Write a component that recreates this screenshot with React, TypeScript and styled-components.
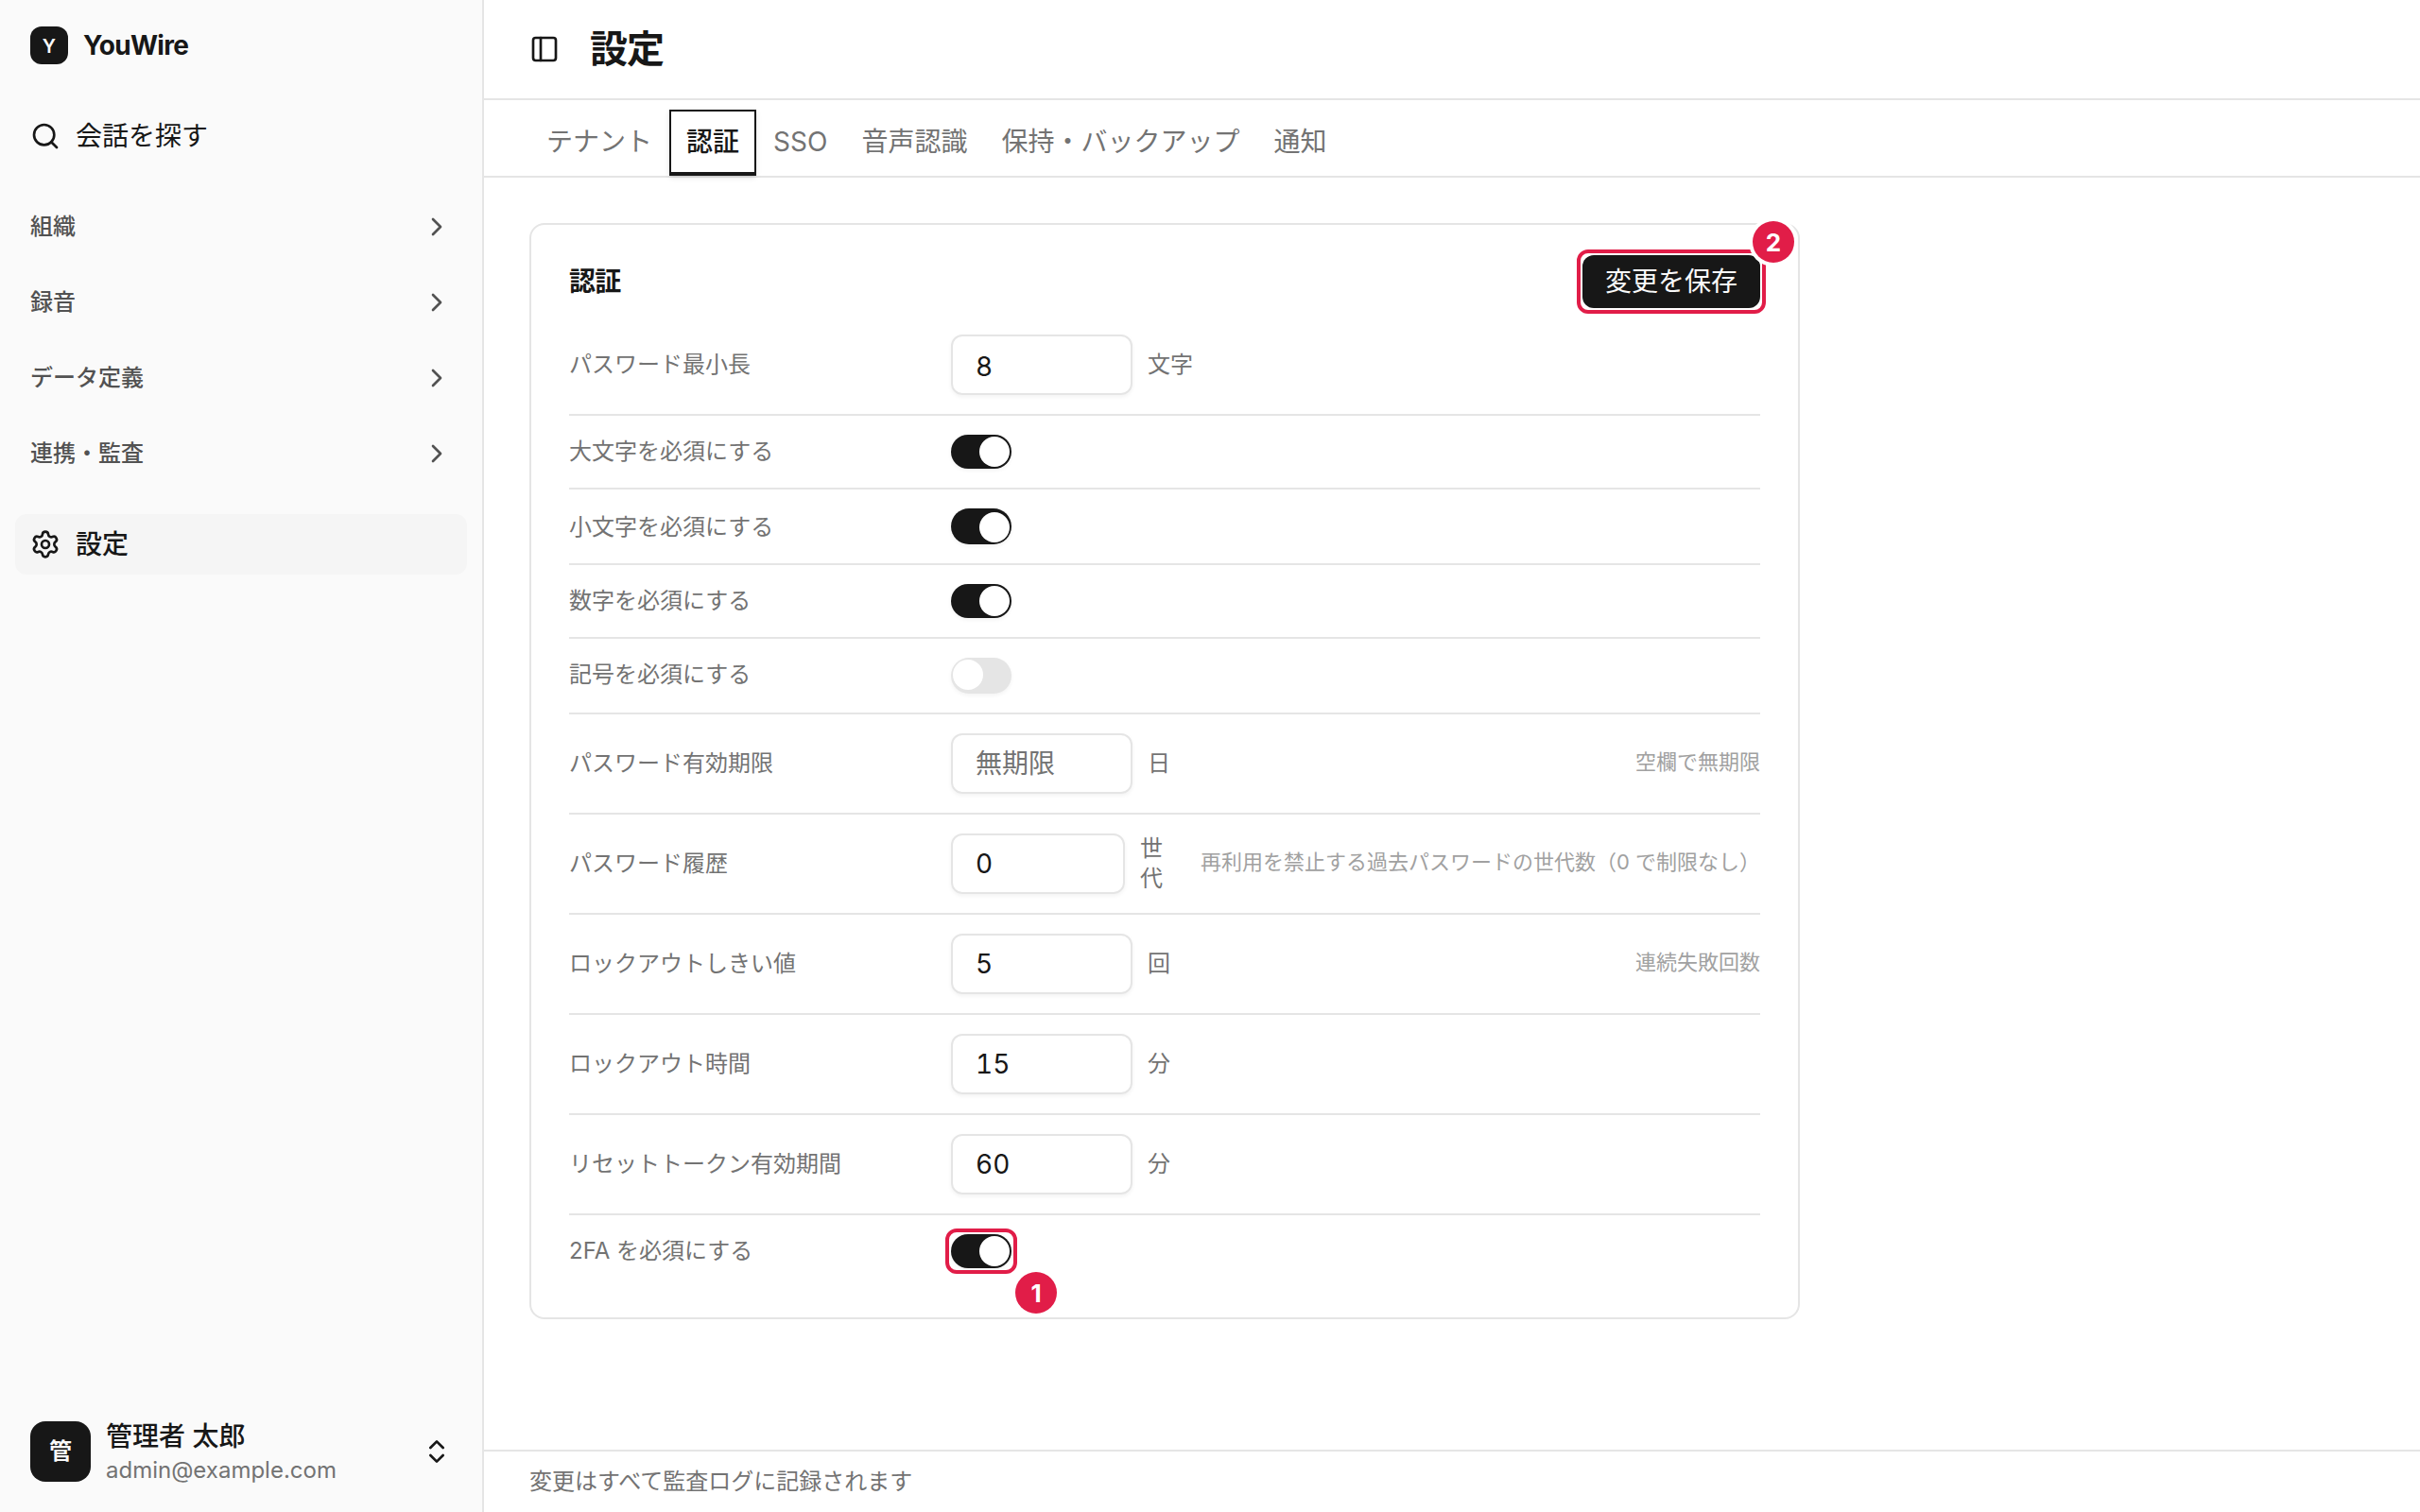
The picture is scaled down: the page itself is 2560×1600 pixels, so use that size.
import React from 'react';
import styled, { createGlobalStyle, css } from 'styled-components';
import { ChevronRight, ChevronsUpDown, PanelLeft, Search, Settings } from 'lucide-react';

const ink = '#171717';
const muted = '#737373';
const line = '#e5e5e5';
const accent = '#e11d48';

const GlobalStyle = createGlobalStyle`
  *, *::before, *::after { box-sizing: border-box; }
  body {
    margin: 0;
    background: #fff;
    color: ${ink};
    font-family: Inter, "Noto Sans CJK JP", sans-serif;
    font-size: 28px;
    line-height: 40px;
    -webkit-font-smoothing: antialiased;
  }
  button, input { font: inherit; color: inherit; }
`;

const Shell = styled.div`
  display: grid;
  grid-template-columns: 512px 1fr;
  width: 2560px;
  height: 1600px;
  overflow: hidden;
`;

const Sidebar = styled.aside`
  display: flex;
  flex-direction: column;
  padding: 0 16px 26px;
  border-right: 2px solid ${line};
  background: #fafafa;
`;

const Brand = styled.div`
  display: flex;
  align-items: center;
  gap: 16px;
  height: 96px;
  margin-bottom: 16px;
  padding: 0 16px;
  font-weight: 700;
  letter-spacing: -0.025em;
`;

const Tile = styled.span`
  display: flex;
  flex: none;
  align-items: center;
  justify-content: center;
  background: ${ink};
  color: #fafafa;
  font-weight: 600;
  letter-spacing: 0;
`;

const Logo = styled(Tile)`
  width: 40px;
  height: 40px;
  padding-top: 2px;
  border-radius: 12px;
  font-size: 20px;
`;

const Avatar = styled(Tile)`
  width: 64px;
  height: 64px;
  border-radius: 16px;
  font-size: 24px;
`;

const NavItem = styled.a<{ $active?: boolean }>`
  display: flex;
  align-items: center;
  gap: 16px;
  height: 64px;
  padding: 0 16px;
  border-radius: 12px;
  ${p => p.$active && css`
    background: #f5f5f5;
    font-weight: 500;
  `}
`;

const NavGroups = styled.nav`
  display: flex;
  flex-direction: column;
  gap: 16px;
  margin: 32px 0;
`;

const NavGroup = styled.a`
  display: flex;
  align-items: center;
  justify-content: space-between;
  height: 64px;
  padding: 0 16px;
  color: #525252;
  font-size: 24px;
  font-weight: 500;
`;

const Account = styled.div`
  display: flex;
  align-items: center;
  gap: 16px;
  margin-top: auto;
  padding: 0 16px;
`;

const AccountText = styled.div`
  display: grid;
  flex: 1;
  padding-top: 4px;
  line-height: 36px;
`;

const AccountName = styled.span`
  font-weight: 500;
`;

const AccountMail = styled.span`
  color: ${muted};
  font-size: 24px;
`;

const Main = styled.main`
  display: flex;
  flex-direction: column;
  min-width: 0;
`;

const Header = styled.header`
  display: flex;
  align-items: center;
  gap: 32px;
  height: 106px;
  padding: 0 48px;
  border-bottom: 2px solid ${line};
`;

const Title = styled.h1`
  margin: 0;
  font-size: 40px;
  font-weight: 600;
  line-height: 56px;
  letter-spacing: -0.025em;
`;

const Tabs = styled.nav`
  display: flex;
  align-items: flex-end;
  height: 82px;
  padding: 0 48px;
  border-bottom: 2px solid ${line};
`;

const Tab = styled.a<{ $active?: boolean }>`
  display: flex;
  align-items: center;
  height: 70px;
  padding: 0 16px;
  border: 2px solid transparent;
  border-bottom-width: 4px;
  color: ${muted};
  ${p => p.$active && css`
    border-color: ${ink};
    color: ${ink};
    font-weight: 500;
    box-shadow: 0 2px 6px rgb(0 0 0 / 0.1), 0 2px 4px -2px rgb(0 0 0 / 0.1);
  `}
`;

const Content = styled.section`
  flex: 1;
  padding: 48px;
`;

const Card = styled.section`
  width: 1344px;
  height: 1160px;
  padding: 32px 40px;
  border: 2px solid ${line};
  border-radius: 16px;
`;

const CardHeader = styled.div`
  display: flex;
  align-items: center;
  justify-content: space-between;
  height: 56px;
  margin-bottom: 8px;
`;

const CardTitle = styled.h2`
  margin: 0;
  font-size: 28px;
  font-weight: 600;
  line-height: 40px;
  letter-spacing: -0.025em;
`;

const Marked = styled.div`
  position: relative;
  display: flex;
  &::after {
    content: '';
    position: absolute;
    inset: -6px;
    border: 4px solid ${accent};
    border-radius: 12px;
  }
`;

const Marker = styled.span<{ $corner: 'top' | 'bottom' }>`
  position: absolute;
  z-index: 1;
  display: flex;
  align-items: center;
  justify-content: center;
  width: 44px;
  height: 44px;
  padding-top: 1px;
  border-radius: 50%;
  background: ${accent};
  box-shadow: 0 0 0 4px #fff;
  color: #fff;
  font-size: 26px;
  font-weight: 700;
  line-height: 1;
  ${p => (p.$corner === 'top'
    ? 'top: -36px; right: -36px;'
    : 'bottom: -48px; right: -48px;')}
`;

const SaveButton = styled.button`
  height: 56px;
  padding: 0 24px;
  border: 0;
  border-radius: 12px;
  background: ${ink};
  color: #fafafa;
  font-weight: 400;
  line-height: 40px;
`;

const Row = styled.div<{ $height: number }>`
  display: flex;
  align-items: flex-start;
  height: ${p => p.$height}px;
  padding-top: 20px;
  border-bottom: 2px solid ${line};
  &:last-child { border-bottom: 0; }
`;

const RowBody = styled.div<{ $height: number }>`
  display: flex;
  flex: 1;
  align-items: center;
  height: ${p => p.$height}px;
  color: ${muted};
  font-size: 24px;
  line-height: 32px;
`;

const RowLabel = styled.span<{ $shift?: 'up' | 'down' }>`
  flex: none;
  width: 404px;
  padding-top: ${p => (p.$shift === 'down' ? 2 : 0)}px;
  padding-bottom: ${p => (p.$shift === 'up' ? 2 : 0)}px;
`;

const Field = styled.input<{ $narrow?: boolean; $low?: boolean }>`
  flex: none;
  width: ${p => (p.$narrow ? 184 : 192)}px;
  height: 64px;
  padding: ${p => (p.$low ? 4 : 0)}px 24px 0;
  border: 2px solid ${line};
  border-radius: 12px;
  outline: 0;
  background: transparent;
  box-shadow: 0 2px 4px rgb(0 0 0 / 0.05);
  color: ${ink};
  font-size: 28px;
  font-variant-numeric: tabular-nums;
  &::placeholder { color: ${muted}; opacity: 1; }
`;

const Unit = styled.span<{ $narrow?: boolean }>`
  margin-left: 16px;
  ${p => p.$narrow && 'width: 24px;'}
`;

const Hint = styled.span`
  margin-left: auto;
  padding-bottom: 4px;
  color: #a1a1a1;
  font-size: 22px;
  white-space: nowrap;
`;

const Track = styled.span<{ $on: boolean; $height: number }>`
  display: flex;
  width: 64px;
  height: ${p => p.$height}px;
  padding: ${p => (p.$on && p.$height > 36 ? '4px 2px 2px' : '2px')};
  justify-content: ${p => (p.$on ? 'flex-end' : 'flex-start')};
  border-radius: 999px;
  background: ${p => (p.$on ? ink : line)};
  box-shadow: 0 2px 4px rgb(0 0 0 / 0.05);
  &::before {
    content: '';
    width: 32px;
    height: 32px;
    border-radius: 50%;
    background: #fff;
  }
`;

const Footer = styled.footer`
  display: flex;
  align-items: center;
  height: 66px;
  padding: 0 48px;
  border-top: 2px solid ${line};
  color: ${muted};
  font-size: 24px;
`;

type Setting =
  | { kind: 'field'; label: string; value?: string; placeholder?: string; unit: string; hint?: string; narrow?: boolean; low?: boolean }
  | { kind: 'switch'; label: string; on: boolean; height: number; shift?: 'up' | 'down'; marker?: string };

const settings: Setting[] = [
  { kind: 'field', label: 'パスワード最小長', value: '8', unit: '文字', low: true },
  { kind: 'switch', label: '大文字を必須にする', on: true, height: 36 },
  { kind: 'switch', label: '小文字を必須にする', on: true, height: 38, shift: 'down' },
  { kind: 'switch', label: '数字を必須にする', on: true, height: 36 },
  { kind: 'switch', label: '記号を必須にする', on: false, height: 38, shift: 'up' },
  { kind: 'field', label: 'パスワード有効期限', placeholder: '無期限', unit: '日', hint: '空欄で無期限' },
  { kind: 'field', label: 'パスワード履歴', value: '0', unit: '世代', hint: '再利用を禁止する過去パスワードの世代数（0 で制限なし）', narrow: true },
  { kind: 'field', label: 'ロックアウトしきい値', value: '5', unit: '回', hint: '連続失敗回数' },
  { kind: 'field', label: 'ロックアウト時間', value: '15', unit: '分' },
  { kind: 'field', label: 'リセットトークン有効期間', value: '60', unit: '分' },
  { kind: 'switch', label: '2FA を必須にする', on: true, height: 36, marker: '1' },
];

const groups = ['組織', '録音', 'データ定義', '連携・監査'];
const tabs = ['テナント', '認証', 'SSO', '音声認識', '保持・バックアップ', '通知'];

function SettingRow({ item }: { item: Setting }) {
  const height = item.kind === 'field' ? 64 : item.height;
  return (
    <Row $height={height + 42}>
      <RowBody $height={height}>
        <RowLabel $shift={item.kind === 'switch' ? item.shift : undefined}>{item.label}</RowLabel>
        {item.kind === 'field' && (
          <>
            <Field $narrow={item.narrow} $low={item.low} defaultValue={item.value} placeholder={item.placeholder} />
            <Unit $narrow={item.narrow}>{item.unit}</Unit>
            {item.hint && <Hint>{item.hint}</Hint>}
          </>
        )}
        {item.kind === 'switch' && !item.marker && <Track $on={item.on} $height={item.height} />}
        {item.kind === 'switch' && item.marker && (
          <Marked>
            <Track $on={item.on} $height={item.height} />
            <Marker $corner="bottom">{item.marker}</Marker>
          </Marked>
        )}
      </RowBody>
    </Row>
  );
}

export default function App() {
  return (
    <>
      <GlobalStyle />
      <Shell lang="ja">
        <Sidebar>
          <Brand>
            <Logo>Y</Logo>
            YouWire
          </Brand>
          <NavItem>
            <Search size={32} />
            <span>会話を探す</span>
          </NavItem>
          <NavGroups>
            {groups.map(g => (
              <NavGroup key={g}>
                <span>{g}</span>
                <ChevronRight size={32} />
              </NavGroup>
            ))}
          </NavGroups>
          <NavItem $active>
            <Settings size={32} />
            <span>設定</span>
          </NavItem>
          <Account>
            <Avatar>管</Avatar>
            <AccountText>
              <AccountName>管理者 太郎</AccountName>
              <AccountMail>admin@example.com</AccountMail>
            </AccountText>
            <ChevronsUpDown size={32} />
          </Account>
        </Sidebar>
        <Main>
          <Header>
            <PanelLeft size={32} />
            <Title>設定</Title>
          </Header>
          <Tabs>
            {tabs.map(t => (
              <Tab key={t} $active={t === '認証'}>{t}</Tab>
            ))}
          </Tabs>
          <Content>
            <Card>
              <CardHeader>
                <CardTitle>認証</CardTitle>
                <Marked>
                  <SaveButton>変更を保存</SaveButton>
                  <Marker $corner="top">2</Marker>
                </Marked>
              </CardHeader>
              {settings.map(s => (
                <SettingRow key={s.label} item={s} />
              ))}
            </Card>
          </Content>
          <Footer>変更はすべて監査ログに記録されます</Footer>
        </Main>
      </Shell>
    </>
  );
}
